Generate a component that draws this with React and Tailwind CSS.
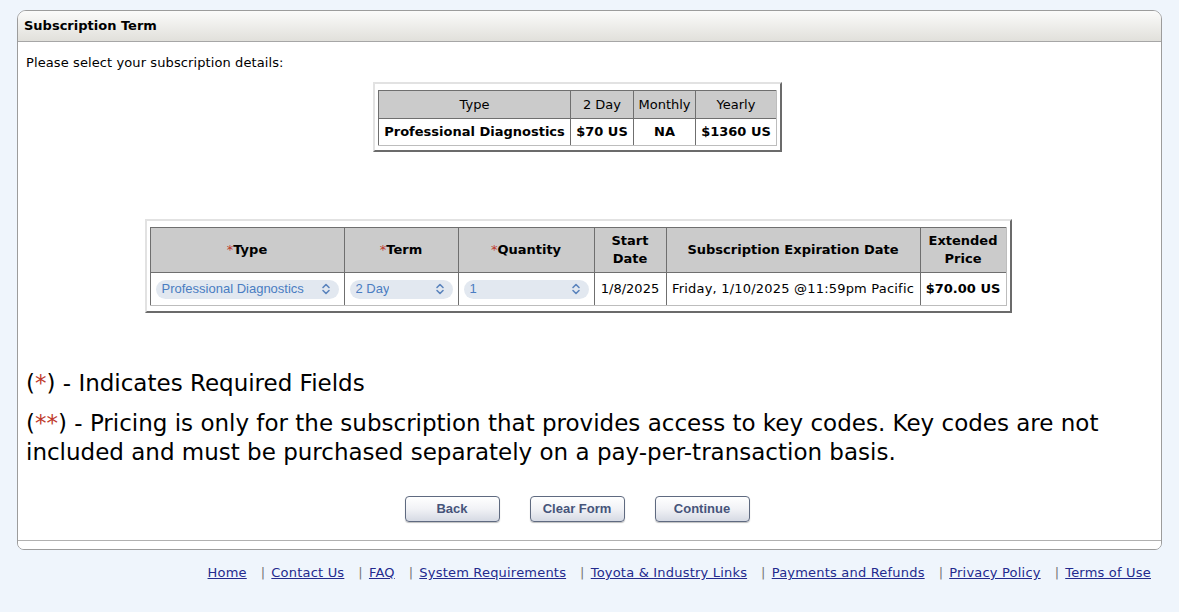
import React from "react";

const Req = () => <span className="text-[#c0392b] font-normal">*</span>;

const UpDown = () => (
  <svg width="10" height="12" viewBox="0 0 10 12" fill="none" stroke="currentColor" strokeWidth="1.6" strokeLinecap="round" strokeLinejoin="round">
    <path d="M2 4.5 L5 1.5 L8 4.5" />
    <path d="M2 7.5 L5 10.5 L8 7.5" />
  </svg>
);

const Pill = ({ label }) => (
  <div className="flex items-center justify-between h-[19px] rounded-full bg-[#e2e8f0] pl-[6px] pr-[8px] text-[#4a7dc2] font-['Liberation_Sans',Arial,sans-serif] text-[13px]">
    <span className="truncate">{label}</span>
    <span className="ml-1 shrink-0 text-[#5b84bd]">
      <UpDown />
    </span>
  </div>
);

const th = "bg-[#cbcbcb] border-t border-l border-[#6f6f6f] px-1 text-[13px]";
const td = "bg-white border-t border-l border-[#6f6f6f] px-1 text-[13px]";

const Btn = ({ children }) => (
  <button className="w-[95px] h-[26px] rounded-[4px] border border-[#5f6a80] bg-gradient-to-b from-white via-[#f1f2f6] to-[#d6dae4] text-[13px] font-bold text-[#46547a] font-['Liberation_Sans',Arial,sans-serif] shadow-[0_1px_1px_rgba(0,0,0,0.25)]">
    {children}
  </button>
);

const links = [
  "Home",
  "Contact Us",
  "FAQ",
  "System Requirements",
  "Toyota & Industry Links",
  "Payments and Refunds",
  "Privacy Policy",
  "Terms of Use",
];

export default function App() {
  return (
    <div className="min-h-screen bg-[#eff5fc] pt-[10px] font-['DejaVu_Sans',Verdana,sans-serif] text-black">
      <div className="mx-[17px] border border-[#9c9c9c] rounded-t-[9px] rounded-b-[7px] bg-white overflow-hidden">
        <div className="h-[31px] flex items-center pl-[6px] bg-gradient-to-b from-[#fbfbfa] to-[#e1e0db] border-b border-[#a6a6a6] text-[13px] font-bold">
          Subscription Term
        </div>

        <div className="border-b border-[#b0b0b0] pb-[18px]">
          <p className="pl-[8px] pt-[13px] text-[13px] leading-[16px] tracking-[0.1px]">
            Please select your subscription details:
          </p>

          <div className="flex justify-center pr-[24px] mt-[11px]">
            <div className="border-2 border-t-[#e2e2e2] border-l-[#e2e2e2] border-r-[#6b6b6b] border-b-[#6b6b6b] pt-[6px] px-[3px] pb-[4px]">
              <table className="table-fixed border-separate border-spacing-0 border-r border-b border-[#bdbdbd] text-center">
                <colgroup>
                  <col className="w-[192px]" />
                  <col className="w-[63px]" />
                  <col className="w-[62px]" />
                  <col className="w-[81px]" />
                </colgroup>
                <tbody>
                  <tr className="h-[28px]">
                    <td className={th}>Type</td>
                    <td className={th}>2 Day</td>
                    <td className={th + " px-0"}>Monthly</td>
                    <td className={th}>Yearly</td>
                  </tr>
                  <tr className="h-[27px] font-bold">
                    <td className={td + " px-0"}>Professional Diagnostics</td>
                    <td className={td + " px-0"}>$70 US</td>
                    <td className={td}>NA</td>
                    <td className={td + " px-0"}>$1360 US</td>
                  </tr>
                </tbody>
              </table>
            </div>
          </div>

          <div className="flex justify-center pr-[23px] mt-[67px]">
            <div className="border-2 border-t-[#e2e2e2] border-l-[#e2e2e2] border-r-[#6b6b6b] border-b-[#6b6b6b] pt-[6px] px-[3px] pb-[5px]">
              <table className="table-fixed border-separate border-spacing-0 border-r border-b border-[#bdbdbd] text-center">
                <colgroup>
                  <col className="w-[194px]" />
                  <col className="w-[114px]" />
                  <col className="w-[136px]" />
                  <col className="w-[72px]" />
                  <col className="w-[254px]" />
                  <col className="w-[86px]" />
                </colgroup>
                <tbody>
                  <tr className="h-[45px] font-bold leading-[18px]">
                    <td className={th}><Req />Type</td>
                    <td className={th}><Req />Term</td>
                    <td className={th}><Req />Quantity</td>
                    <td className={th}>Start<br />Date</td>
                    <td className={th}>Subscription Expiration Date</td>
                    <td className={th}>Extended<br />Price</td>
                  </tr>
                  <tr className="h-[33px]">
                    <td className={td + " px-[5px]"}><Pill label="Professional Diagnostics" /></td>
                    <td className={td + " px-[5px]"}><Pill label="2 Day" /></td>
                    <td className={td + " px-[5px]"}><Pill label="1" /></td>
                    <td className={td + " px-0"}>1/8/2025</td>
                    <td className={td + " px-0 tracking-[0.2px]"}>Friday, 1/10/2025 @11:59pm Pacific</td>
                    <td className={td + " px-0 font-bold"}>$70.00 US</td>
                  </tr>
                </tbody>
              </table>
            </div>
          </div>

          <div className="pl-[8px] mt-[56px] text-[23px] leading-[29px] pr-[40px]">
            <p>(<span className="text-[#c0392b]">*</span>) - Indicates Required Fields</p>
            <p className="mt-[11px]">
              (<span className="text-[#c0392b]">**</span>) - Pricing is only for the subscription that provides access to key codes. Key codes are not included and must be purchased separately on a pay-per-transaction basis.
            </p>
          </div>

          <div className="flex justify-center gap-[30px] pr-[25px] mt-[29px]">
            <Btn>Back</Btn>
            <Btn>Clear Form</Btn>
            <Btn>Continue</Btn>
          </div>
        </div>
        <div className="h-[8px] bg-white" />
      </div>

      <div className="flex justify-end items-center pr-[28px] mt-[15px] text-[13px] leading-[16px] tracking-[0.2px]">
        {links.map((l, i) => (
          <React.Fragment key={l}>
            {i > 0 && <span className="text-[#777] ml-[14px] mr-[6px]">|</span>}
            <a href="#" className="text-[#232a8e] underline">{l}</a>
          </React.Fragment>
        ))}
      </div>
    </div>
  );
}
